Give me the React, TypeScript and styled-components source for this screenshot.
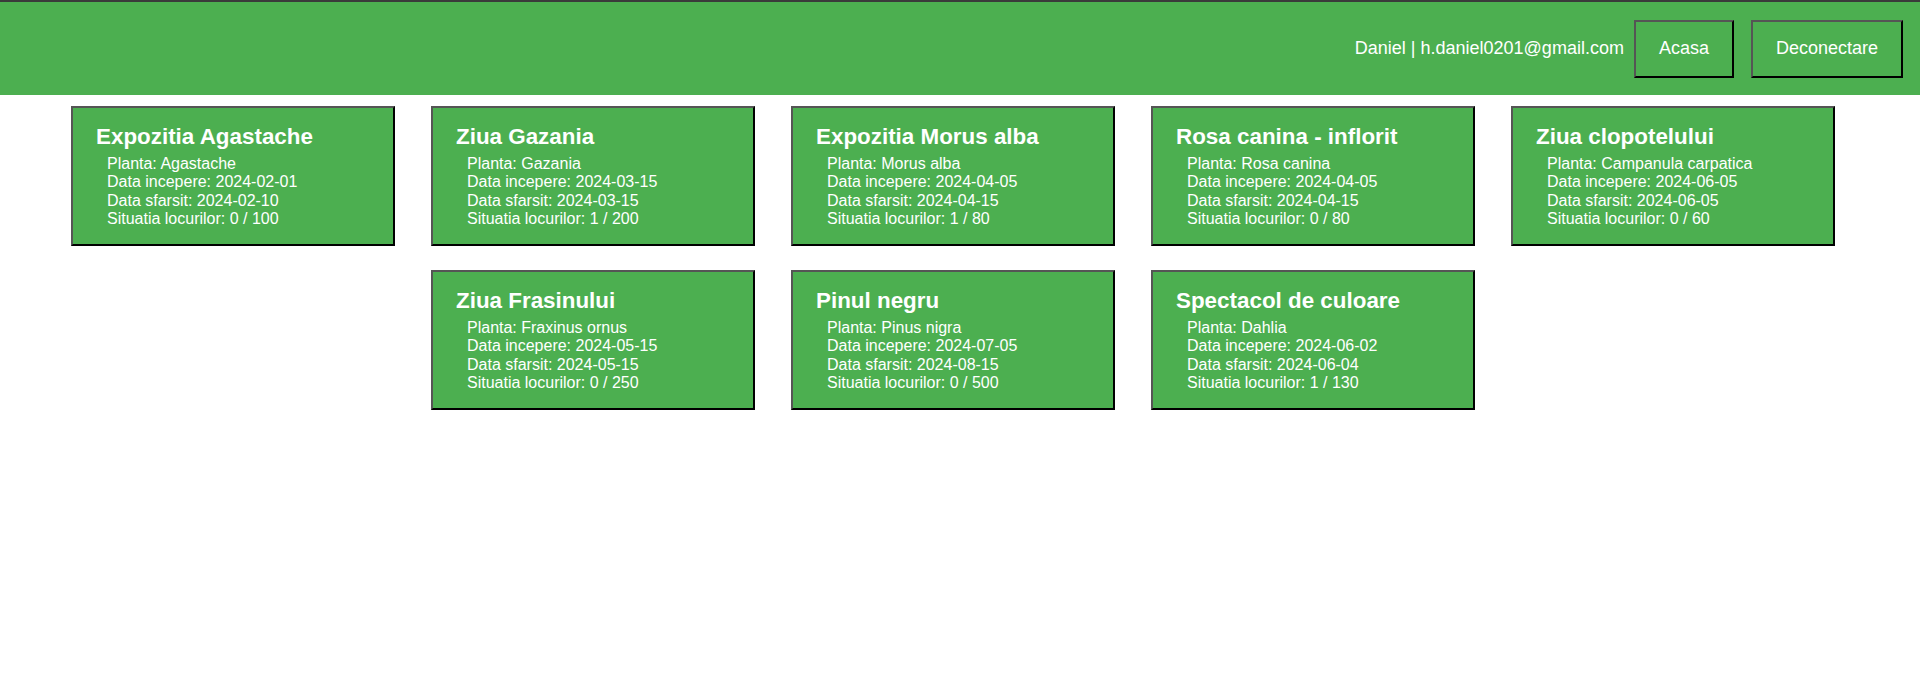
import React from "react";
import styled, { createGlobalStyle } from "styled-components";

const GlobalStyle = createGlobalStyle`
  html, body {
    margin: 0;
    padding: 0;
    background: #ffffff;
    font-family: "Liberation Sans", Arial, sans-serif;
  }
`;

const Header = styled.header`
  display: flex;
  align-items: center;
  justify-content: flex-end;
  height: 93px;
  background: #4caf50;
  border-top: 2px solid #3a3a3a;
  padding-right: 17px;
  color: #ffffff;
  font-size: 18px;
`;

const UserInfo = styled.span`
  margin-right: 10px;
`;

const NavButton = styled.button<{ $last?: boolean }>`
  height: 58px;
  padding: 0 23px;
  margin-left: ${(p) => (p.$last ? "17px" : "0")};
  background: #4caf50;
  color: #ffffff;
  font-family: "Liberation Sans", Arial, sans-serif;
  font-size: 18px;
  border: 2px solid;
  border-color: #555555 #000000 #000000 #555555;
  cursor: pointer;
`;

const Grid = styled.main`
  width: 1906px;
  display: flex;
  flex-wrap: wrap;
  justify-content: center;
  column-gap: 36px;
  row-gap: 24px;
  margin-top: 11px;
`;

const Card = styled.div`
  box-sizing: border-box;
  width: 324px;
  height: 140px;
  background: #4caf50;
  color: #ffffff;
  border: 2px solid;
  border-color: #555555 #000000 #000000 #555555;
  padding: 16px 22px 12px 23px;
`;

const Title = styled.h2`
  margin: 0 0 6px 0;
  font-size: 22.4px;
  font-weight: bold;
  line-height: 25px;
`;

const Details = styled.div`
  padding-left: 11px;
  font-size: 16px;
  line-height: 18.4px;
`;

type Expo = {
  title: string;
  plant: string;
  start: string;
  end: string;
  seats: string;
};

const expos: Expo[] = [
  { title: "Expozitia Agastache", plant: "Agastache", start: "2024-02-01", end: "2024-02-10", seats: "0 / 100" },
  { title: "Ziua Gazania", plant: "Gazania", start: "2024-03-15", end: "2024-03-15", seats: "1 / 200" },
  { title: "Expozitia Morus alba", plant: "Morus alba", start: "2024-04-05", end: "2024-04-15", seats: "1 / 80" },
  { title: "Rosa canina - inflorit", plant: "Rosa canina", start: "2024-04-05", end: "2024-04-15", seats: "0 / 80" },
  { title: "Ziua clopotelului", plant: "Campanula carpatica", start: "2024-06-05", end: "2024-06-05", seats: "0 / 60" },
  { title: "Ziua Frasinului", plant: "Fraxinus ornus", start: "2024-05-15", end: "2024-05-15", seats: "0 / 250" },
  { title: "Pinul negru", plant: "Pinus nigra", start: "2024-07-05", end: "2024-08-15", seats: "0 / 500" },
  { title: "Spectacol de culoare", plant: "Dahlia", start: "2024-06-02", end: "2024-06-04", seats: "1 / 130" },
];

export default function App() {
  return (
    <>
      <GlobalStyle />
      <Header>
        <UserInfo>Daniel | h.daniel0201@gmail.com</UserInfo>
        <NavButton>Acasa</NavButton>
        <NavButton $last>Deconectare</NavButton>
      </Header>
      <Grid>
        {expos.map((e) => (
          <Card key={e.title}>
            <Title>{e.title}</Title>
            <Details>
              <div>Planta: {e.plant}</div>
              <div>Data incepere: {e.start}</div>
              <div>Data sfarsit: {e.end}</div>
              <div>Situatia locurilor: {e.seats}</div>
            </Details>
          </Card>
        ))}
      </Grid>
    </>
  );
}
